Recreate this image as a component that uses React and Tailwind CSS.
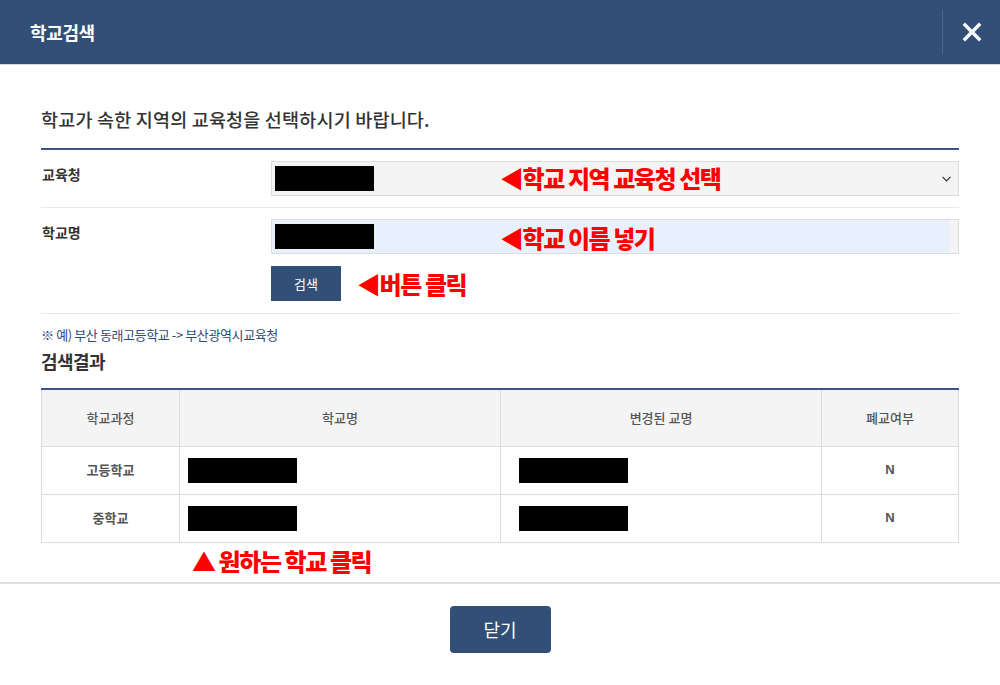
import React from "react";

const font = { fontFamily: '"Noto Sans CJK KR", "Noto Sans", sans-serif' };

const rows = [
  { course: "고등학교", closed: "N" },
  { course: "중학교", closed: "N" },
];

const Redacted = () => <div className="w-[109px] h-[25px] bg-black" />;

const Note = ({ children, className = "" }) => (
  <span
    className={`text-[#ff0000] font-black text-[24px] leading-none tracking-[-0.06em] whitespace-nowrap ${className}`}
  >
    {children}
  </span>
);

export default function App() {
  return (
    <div className="w-[1000px] h-[685px] bg-white flex flex-col overflow-hidden" style={font}>
      {/* header */}
      <div className="h-[65px] bg-[#324f78] flex items-center justify-between pl-[30px] border-b border-[#d5dae2] shrink-0">
        <h1 className="text-white text-[18px] font-bold tracking-[-0.02em]">학교검색</h1>
        <div className="flex items-center h-full">
          <div className="w-px h-[44px] bg-[#4a6590]" />
          <button className="w-[57px] h-full flex items-center justify-center">
            <svg width="20" height="20" viewBox="0 0 20 20">
              <path d="M3 3 L17 17 M17 3 L3 17" stroke="white" strokeWidth="3.4" strokeLinecap="square" />
            </svg>
          </button>
        </div>
      </div>

      {/* body */}
      <div className="px-[41px] pt-[41px] flex-1">
        <p className="text-[18.5px] leading-[26px] text-[#333] font-medium tracking-[0.01em] mb-[16px]">
          학교가 속한 지역의 교육청을 선택하시기 바랍니다.
        </p>
        <div className="border-t-2 border-[#3a5584]">
          {/* row 1 */}
          <div className="flex pt-[11px] pb-[11px] border-b border-[#e8e8e8]">
            <div className="w-[230px] h-[35px] pt-[3px] pl-px text-[14px] font-bold text-[#333]">교육청</div>
            <div className="relative flex-1 h-[35px] bg-[#f4f4f4] border border-[#dcdcdc] flex items-center pl-[3px]">
              <div className="w-[99px] h-[25px] bg-black" />
              <Note className="absolute left-[228px] top-[4px]">◀학교 지역 교육청 선택</Note>
              <svg className="absolute right-[7px] top-[14px]" width="9" height="6" viewBox="0 0 9 6">
                <path d="M0.5 0.8 L4.5 4.8 L8.5 0.8" stroke="#333" strokeWidth="1.2" fill="none" />
              </svg>
            </div>
          </div>
          {/* row 2 */}
          <div className="flex pt-[11px] pb-[12px] border-b border-[#e8e8e8]">
            <div className="w-[230px] h-[35px] pt-[3px] pl-px text-[14px] font-bold text-[#333]">학교명</div>
            <div className="flex-1 flex flex-col gap-[12px]">
              <div className="relative h-[35px] border border-[#dcdcdc] bg-[#f4f4f4] pr-[8px] flex">
                <div className="flex-1 bg-[#e8f0fe] flex items-center pl-[3px]">
                  <div className="w-[99px] h-[25px] bg-black" />
                </div>
                <Note className="absolute left-[228px] top-[6px]">◀학교 이름 넣기</Note>
              </div>
              <div className="flex items-center gap-[16px]">
                <button className="w-[70px] h-[35px] bg-[#324f78] text-white text-[13px]">검색</button>
                <Note>◀버튼 클릭</Note>
              </div>
            </div>
          </div>
        </div>

        <p className="mt-[12px] text-[13px] leading-[18px] text-[#2d4a7c] tracking-[-0.03em]">
          ※ 예) 부산 동래고등학교 -&gt; 부산광역시교육청
        </p>
        <h2 className="mt-[4px] text-[18px] leading-[26px] font-bold text-[#333] tracking-[-0.03em]">검색결과</h2>

        <table className="mt-[14px] w-full border-collapse border-t-2 border-[#3a5584] text-[13px]">
          <thead>
            <tr className="h-[57px] bg-[#f4f4f4] text-[#555] font-medium">
              <th className="w-[138px] border border-[#dcdcdc] font-medium">학교과정</th>
              <th className="w-[321px] border border-[#dcdcdc] font-medium">학교명</th>
              <th className="w-[321px] border border-[#dcdcdc] font-medium">변경된 교명</th>
              <th className="border border-[#dcdcdc] font-medium">폐교여부</th>
            </tr>
          </thead>
          <tbody>
            {rows.map((r) => (
              <tr key={r.course} className="h-[48px] text-[#555] font-bold">
                <td className="border border-[#dcdcdc] text-center">{r.course}</td>
                <td className="border border-[#dcdcdc] pl-[8px]">
                  <Redacted />
                </td>
                <td className="border border-[#dcdcdc] pl-[18px]">
                  <Redacted />
                </td>
                <td className="border border-[#dcdcdc] text-center" style={{ fontFamily: '"Liberation Sans", sans-serif' }}>
                  {r.closed}
                </td>
              </tr>
            ))}
          </tbody>
        </table>

        <div className="pl-[151px] mt-[6px]">
          <Note>▲ 원하는 학교 클릭</Note>
        </div>
      </div>

      {/* footer */}
      <div className="h-[103px] border-t-2 border-[#e0e0e0] flex justify-center pt-[22px] shrink-0">
        <button className="w-[101px] h-[47px] rounded-[4px] bg-[#324f78] text-white text-[18px]">닫기</button>
      </div>
    </div>
  );
}
